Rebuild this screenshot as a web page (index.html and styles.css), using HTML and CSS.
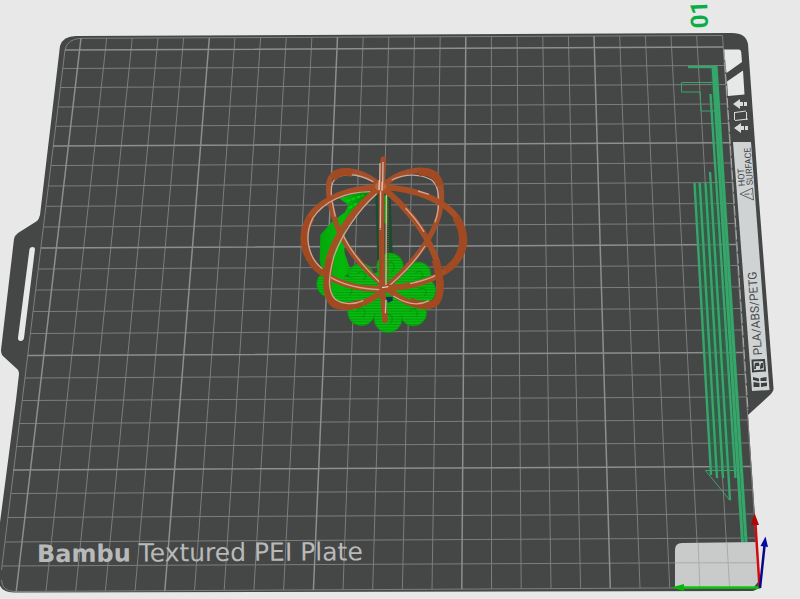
FILE: index.html
```html
<!DOCTYPE html>
<html lang="en">
<head>
<meta charset="utf-8">
<title>Build plate preview</title>
<link rel="stylesheet" href="styles.css">
</head>
<body>
<main class="viewport">
<svg class="scene" viewBox="0 0 800 599" role="img" aria-label="Build plate with sliced model">
  <defs>
    <pattern id="layers" width="8" height="8" patternUnits="userSpaceOnUse">
      <rect width="8" height="8" fill="#06bd10"/>
      <rect width="8" height="3" fill="#079a0d"/>
    </pattern>
    <linearGradient id="moon" x1="0" y1="0" x2="1" y2="0">
      <stop offset="0" stop-color="#04a60a"/>
      <stop offset=".45" stop-color="#04ba0b"/>
      <stop offset="1" stop-color="#057f0b"/>
    </linearGradient>
  </defs>

  <!-- plate -->
  <path class="plate" fill-rule="evenodd" d="M60 46Q63 36 76 36L732 33Q746 33 748 44L759 200L773.500 388Q774 391 771 394L748 415L760 588L753 591L14 592.500Q0 592 -1 582L-1 530L16 400L19 374Q19 370 16 368L4 357Q1 355 1 350L14 239Q15 235 18 233L37 221Q39 219 40 215ZM32.500 247Q30 247 29.500 249L18 338Q18 341 20.500 341Q23.500 341 24 338L35 249Q35 247 32.500 247Z"/>

  <!-- grid -->
  <path class="border" d="M1.500 570L65 50Q67 39 81 38.300L722.500 35.500L759 587.500L14 591.500Q2 591 1.500 580"/>
  <path class="minor" d="M106.700 38L46 591M132.300 38L75.700 591M158 38L105.400 591M183.600 38L135 591M234.900 38L194.500 591M260.600 38L224.200 590M286.200 38L253.900 590M311.900 37L283.600 590M363.200 37L343 590M388.800 37L372.700 589M414.500 37L402.400 589M440.200 37L432 589M491.400 36L491.500 589M517.100 36L521.200 589M542.800 36L551 589M568.400 36L580.600 588M619.700 36L640 588M645.400 36L669.700 588M671 36L699.400 588M696.700 36L729 588"/>
  <path class="minor" d="M63 68.500L725 65.500M60 87.500L726 84.500M58 107L727 104M56 126.300L728 123.500M51 165.500L731 163M48 186L732 182.500M46 206.300L734 203.500M43 227L735 223.500M38 269L738 265.500M36 290L739 287M33 311.500L740 308.500M30 333.500L742 330M25 378L745 374.500M22 400.500L746 397M19 423.500L748 420M16 446.500L749 443M11 493.500L752 490M8 517.500L754 514M5 542L755 538M2 566L757 562.500"/>
  <path class="major" d="M81 38L16.300 591M209.300 38L164.800 591M337.500 37L313.400 590M465.800 37L461.800 589M594 36L610.300 588M65 50L723 47M53 146L730 142.800M41 248L736 244.500M28 355.500L743 352.500M13 470L751 466.500"/>

  <!-- purge corner -->
  <path class="corner" d="M675 550Q675 543 682 543L757 542L759.500 580L754 587L675 587Z"/>
  <path class="corner-grid" d="M675 562.800H758M698.200 543L699.800 587M727 543L729.500 587"/>

  <!-- plate label strip -->
  <path class="cutout" d="M724 49.500L739 49.500Q741 49.500 741.200 52L742 62L726.500 73ZM743 70.500L744.500 94.500L728 96L727 81.500Z"/>
  <path class="strip-edge" d="M724 50L748 410"/>
  <path class="strip" d="M733 142L751 142L769.500 390L752 391Z"/>
  <g class="tab-icons">
    <path d="M733 104L740 99V102H743V106H740V109ZM744 102H747V106H744ZM734 128L741 123V126H744V130H741V133ZM745 126H748V130H745Z"/>
    <path class="tab-frame" d="M734.500 112V120M746.500 112V120M735 112.500L746 111M735 120.500L748 119"/>
  </g>
  <path class="warning" d="M740 194L752.500 188L753.500 200ZM744.500 194.300L749.500 194M751 194H752"/>
  <text class="strip-small" transform="translate(745 186) rotate(-94)">HOT</text>
  <text class="strip-small" transform="translate(753 185) rotate(-94)">SURFACE</text>
  <text class="strip-text" transform="translate(762 355) rotate(-94)">PLA/ABS/PETG</text>
  <g class="badge">
    <path class="badge-ring" d="M752.500 360.500L764 360L765 370.500L753 371.500Z"/>
    <path d="M755 363L759 362.500L759.500 366H756V369H754ZM761 363H763V368L760 369V367Z"/>
    <path d="M753 377L759 378.500V381.500L753 380ZM760.500 378L766.500 377V381L760.500 381ZM753.500 382L759.500 383V387L753.500 387ZM761 383L767 382.500V386L761 387Z"/>
  </g>

  <text class="plate-number" transform="translate(708 28) rotate(-92)">01</text>
  <text class="plate-name" transform="translate(37 562) rotate(-0.300)"><tspan class="brand">Bambu</tspan> Textured PEI Plate</text>

  <!-- travel and prime paths -->
  <path class="purge-shade" d="M710 66H718L748 542H741ZM694 183H714L737 470H711Z"/>
  <path class="purge" d="M694.500 183L711 475M699.700 183L717 478M705.500 183L723 478M710 172L730 500M710.500 94L735.500 478"/>
  <path class="purge purge-wide" d="M713 66L742.500 542M716 66L746 542"/>
  <path class="purge" d="M688 67H717"/>
  <path class="purge-thin" d="M716 82.500H681.500V92H700L701 111H716M737 470.500H705.500L730 500.500"/>

  <!-- sliced model -->
  <g transform="translate(280 140) scale(.33333)">
    <path fill="#174d32" d="M286 160H332L338 345L292 365Z"/>
    <path fill="#069d14" d="M302 165L324 168L323 258L304 240Z"/>
    <g fill="url(#layers)" stroke="#04930b" stroke-width="2">
      <circle cx="150" cy="432" r="40"/>
      <circle cx="243" cy="408" r="38"/>
      <circle cx="330" cy="379" r="40"/>
      <circle cx="415" cy="404" r="38"/>
      <circle cx="427" cy="452" r="40"/>
      <circle cx="400" cy="518" r="40"/>
      <circle cx="324" cy="536" r="42"/>
      <circle cx="244" cy="516" r="41"/>
      <circle cx="195" cy="450" r="41"/>
    </g>
    <path fill="url(#layers)" d="M220 415L300 395L370 390L430 450L390 520L325 530L250 510L195 470Z"/>
    <path fill="none" stroke="#078d0e" stroke-width="3" d="M323 370C340 355 352 385 333 398M405 402C415 385 438 398 423 416M412 452C425 435 450 449 434 467M388 514C397 497 423 512 406 531M315 532C330 510 346 533 330 553M230 515C245 493 266 514 248 533M190 447C204 428 227 445 209 465M231 402C247 385 266 404 250 420"/>
    <path fill="#173057" d="M316 470H338V482L324 488Z"/>
    <path fill="url(#moon)" d="M178 175L230 160L277 153L240 188L207 232L191 290L194 340L214 397L190 412L195 447L160 460L130 420L119 360L121 285L155 246L195 217L205 195Z"/>
    <path fill="none" stroke="#04cf0b" stroke-width="6" stroke-dasharray="12 4" d="M200 184L250 166M207 205L230 190"/>

    <g class="wire">
      <path d="M302 138C260 98 200 82 165 99C135 115 143 170 162 230C185 320 255 390 318 443"/>
      <path d="M308 138C350 98 420 78 460 100C495 120 488 200 468 250C440 325 372 392 320 443"/>
    </g>
    <g class="glint">
      <path d="M280 125C230 98 185 99 164 118C145 140 157 190 166 230M187 280C210 335 260 390 310 437"/>
      <path d="M335 120C380 98 425 103 455 120C482 140 480 205 465 247M435 318C405 366 360 410 326 439"/>
    </g>
    <g class="wire wire-front">
      <path d="M302 142C210 143 125 175 88 232C50 302 80 365 138 405C190 438 260 452 318 444"/>
      <path d="M307 142C405 145 500 182 535 240C571 306 550 359 490 397C440 429 378 443 320 444"/>
      <path d="M302 143C225 195 164 290 145 362C134 425 137 475 166 494C210 516 276 482 319 444"/>
      <path d="M305 143C373 190 443 282 470 362C487 428 487 472 463 493C422 511 365 483 321 445"/>
    </g>
    <g class="wire-tips">
      <path d="M151 355C137 420 137 475 165 493C191 503 218 498 243 489M467 360C486 430 485 472 463 491C438 500 410 493 389 483M94 232C52 295 80 365 129 398M528 232C566 295 548 360 494 393M158 115Q180 87 217 100M415 98Q467 85 480 137"/>
    </g>
    <g class="glint">
      <path d="M271 155C185 157 130 188 98 235C70 291 86 355 127 386M152 412Q210 446 302 449M390 431Q440 420 466 407M414 153L447 163"/>
      <path d="M290 161C235 210 183 286 161 352C144 415 143 454 166 478C187 494 221 495 250 482M340 468C375 490 415 499 447 482M377 205Q412 242 432 276"/>
    </g>
    <path class="center-wire" d="M310 58L304 140L306 440L315 541"/>
    <path class="center-glint" d="M300 70L299 140M309 66L308 145M302 154L301 270M319 165L318 435M318 480L316 520"/>
    <path fill="none" stroke="#9d4524" stroke-width="5" stroke-dasharray="3 3" d="M301 265V420M324 180V430"/>
    <ellipse cx="302" cy="139" rx="17" ry="13" fill="#b8653f"/>
    <path stroke="#e8cabc" stroke-width="4" d="M298 120L297 150M307 125L306 152M306 443L325 440"/>
  </g>

  <!-- axes -->
  <g class="axis axis-y"><path d="M760 587.500H684"/><path class="tip" d="M671 587.500L684 584V591Z"/></g>
  <g class="axis axis-x"><path d="M759.500 587L755.500 524"/><path class="tip" d="M754.500 513L751 525H759Z"/></g>
  <g class="axis axis-z"><path d="M760 588L764.500 546"/><path class="tip" d="M765.500 536.500L760.500 546L768 547Z"/></g>
</svg>
</main>
</body>
</html>
```

FILE: styles.css
```css
body {
  margin: 0;
  background: #e8e8e8;
}

.viewport,
.scene {
  display: block;
  width: 100%;
}

.scene {
  height: auto;
}

.plate {
  fill: #454746;
}

.border,
.minor,
.major {
  fill: none;
  stroke: #7c7f7d;
  stroke-width: 1;
}

.minor {
  stroke: #7a7e7c;
}

.major {
  stroke: #8b8f8d;
  stroke-width: 1.5;
}

.corner {
  fill: #c9caca;
}

.corner-grid {
  fill: none;
  stroke: #aaacac;
}

.cutout {
  fill: #e8e8e8;
}

.strip {
  fill: #d0d3d4;
}

.strip-edge {
  fill: none;
  stroke: #a9acab;
  stroke-width: 1;
  stroke-dasharray: 10 2;
}

.tab-icons {
  fill: #d9dcdc;
}

.tab-frame,
.warning {
  fill: none;
  stroke: #d9dcdc;
  stroke-width: 1;
}

.warning {
  stroke: #606364;
}

.strip-small,
.strip-text {
  fill: #454849;
  font-family: Roboto, sans-serif;
  font-size: 9px;
}

.strip-text {
  font-size: 12px;
}

.badge {
  fill: #3c3f40;
}

.badge-ring {
  fill: none;
  stroke: #3c3f40;
  stroke-width: 2;
}

.plate-number {
  fill: #0bad48;
  font-family: "Liberation Sans", sans-serif;
  font-size: 24px;
  font-weight: 700;
}

.plate-number {
  font-family: "Liberation Sans Narrow", Roboto, sans-serif;
}

.plate-name {
  fill: #b8baba;
  font-family: "DejaVu Sans", sans-serif;
  font-size: 25px;
}

.brand {
  font-size: 24px;
  font-weight: 700;
}

.purge,
.purge-thin {
  fill: none;
  stroke: #36a66b;
  stroke-width: 2.4;
}

.purge-wide {
  stroke-width: 3;
}

.purge-thin {
  stroke-width: 1;
}

.purge-shade {
  fill: #2c6949;
  fill-opacity: .65;
}

.wire {
  fill: none;
  stroke: #a34f29;
  stroke-width: 16;
}

.wire-front {
  stroke: #a84e25;
  stroke-width: 18;
}

.wire-tips {
  fill: none;
  stroke: #a14a22;
  stroke-width: 23;
}

.glint {
  fill: none;
  stroke: #cda794;
  stroke-width: 4;
}

.center-wire {
  fill: none;
  stroke: #a44d28;
  stroke-width: 17;
  stroke-linecap: round;
}

.center-glint {
  fill: none;
  stroke: #d4b7aa;
  stroke-width: 4;
}

.axis {
  fill: none;
  stroke-width: 2.5;
}

.axis .tip {
  stroke: none;
}

.axis-x {
  stroke: #d40909;
}

.axis-x .tip {
  fill: #ad0808;
}

.axis-y {
  stroke: #08c908;
}

.axis-y .tip {
  fill: #08b508;
}

.axis-z {
  stroke: #08088e;
}

.axis-z .tip {
  fill: #0808a8;
}
```
